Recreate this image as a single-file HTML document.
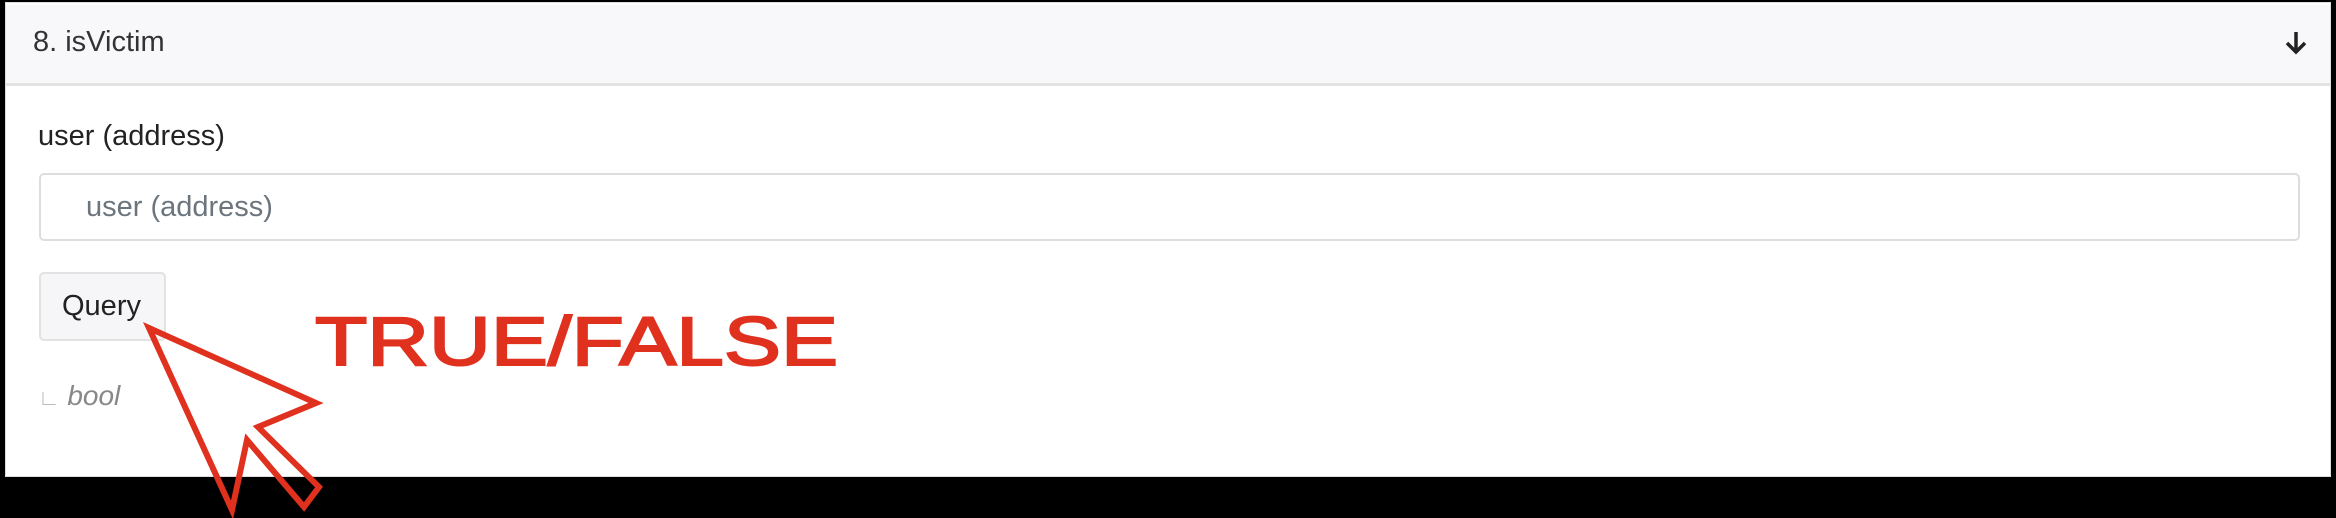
<!DOCTYPE html>
<html><head><meta charset="utf-8"><style>
html,body{margin:0;padding:0;}
body{width:2336px;height:518px;background:#000;position:relative;overflow:hidden;font-family:"Liberation Sans",sans-serif;}
.card{position:absolute;left:5px;top:2px;width:2326px;height:475px;background:#fff;border:1px solid #ddd;box-sizing:border-box;}
.hdr{position:absolute;left:0;top:2px;right:0;height:78px;background:#f8f8fa;border-bottom:3px solid #e3e3e3;}
.t{position:absolute;white-space:nowrap;}
</style></head><body>
<div class="card">
  <div class="hdr"></div>
</div>
<div class="t" style="left:33px;top:26px;font-size:29px;color:#333;">8. isVictim</div>
<svg style="position:absolute;left:2284px;top:30px" width="24" height="26" viewBox="0 0 24 26"><path d="M12 2 V22 M3 13 L12 22 L21 13" stroke="#222" stroke-width="3.5" fill="none"/></svg>
<div class="t" style="left:38px;top:120px;font-size:29px;color:#222;">user (address)</div>
<div style="position:absolute;left:39px;top:173px;width:2261px;height:68px;border:2px solid #ddd;border-radius:5px;box-sizing:border-box;background:#fff;"></div>
<div class="t" style="left:86px;top:191px;font-size:29px;color:#6c757d;">user (address)</div>
<div style="position:absolute;left:39px;top:272px;width:127px;height:69px;border:2px solid #e2e2e2;border-radius:5px;box-sizing:border-box;background:#f6f6f8;"></div>
<div class="t" style="left:62px;top:290px;font-size:29px;color:#222;">Query</div>
<div class="t" style="left:38px;top:380px;font-size:28px;color:#888;font-style:italic;"><span style="font-style:normal;color:#bbb;font-size:22px">∟</span> bool</div>
<div class="t" style="left:315px;top:302px;font-size:69px;font-weight:normal;-webkit-text-stroke:2px #e0301e;color:#e0301e;transform:scaleX(1.24);transform-origin:0 0;line-height:80px;">TRUE/FALSE</div>
<svg style="position:absolute;left:0;top:0" width="2336" height="518"><path d="M149 328 L316 403 L258 427 L319 487 L304 507 L247 440 L232 510 Z" fill="none" stroke="#e0301e" stroke-width="6" stroke-linejoin="miter"/></svg>
</body></html>
